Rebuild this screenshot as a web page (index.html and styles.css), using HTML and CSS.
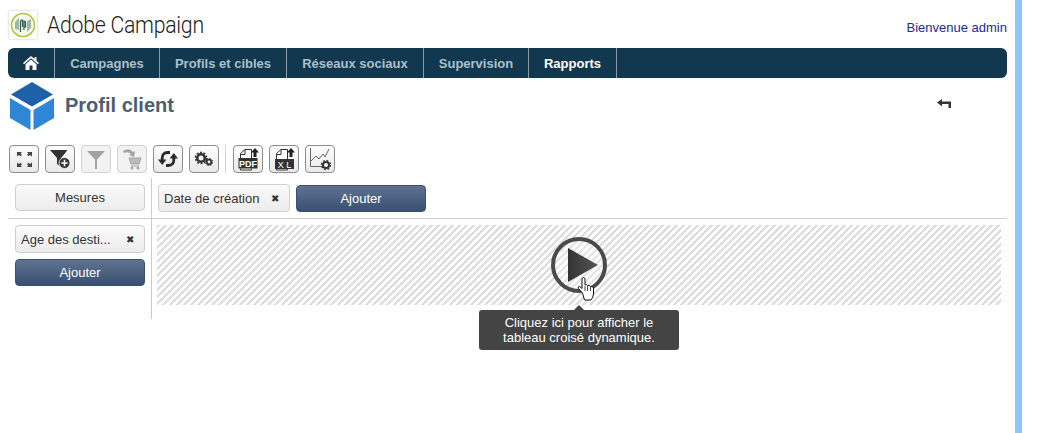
FILE: index.html
```html
<!DOCTYPE html>
<html lang="fr">
<head>
  <meta charset="UTF-8" />
  <title>Adobe Campaign - Profil client</title>
  <link rel="stylesheet" href="styles.css">
</head>
<body>
  <div class="page">
    <div class="main">
      <header class="top">
        <div class="brand">
          <span class="logo">
            <svg width="28" height="28" viewBox="0 0 28 28">
              <circle cx="14" cy="14" r="11.500" fill="#f4f6f1" stroke="#b3c638" stroke-width="1.600"/>
              <path d="M6 18V11l4-4v12zM18 21V10l4-2v9z" fill="#9cb8a6"/>
              <path d="M11.500 21V10.500q0-1.500 1.500-1.500h.5v7M15 19v-9q1.500 0 1.500 1.500V16l-2.500 1.500" fill="none" stroke="#2f5a45" stroke-width="1.200"/>
            </svg>
          </span>
          <span class="brand-name">Adobe Campaign</span>
        </div>
        <a class="welcome">Bienvenue admin</a>
      </header>

      <nav class="nav">
        <a class="nav-home">
          <svg width="16" height="14" viewBox="0 0 16 14">
            <path d="M8 0L0 7l1 1.200L8 2.300l7 5.900L16 7l-2.500-2.200V1h-2v2z" fill="#fff"/>
            <path d="M8 3.500L2.500 8.200V14h4V9.500h3V14h4V8.200z" fill="#fff"/>
          </svg>
        </a>
        <a class="nav-item nav-campagnes">Campagnes</a>
        <a class="nav-item nav-profils">Profils et cibles</a>
        <a class="nav-item nav-reseaux">Réseaux sociaux</a>
        <a class="nav-item nav-supervision">Supervision</a>
        <a class="nav-item nav-rapports active">Rapports</a>
      </nav>

      <div class="title-row">
        <svg class="cube" width="44" height="48" viewBox="0 0 44 48">
          <path d="M22 0L43 12.500 22 24.500 1 12.500z" fill="#1f61a8"/>
          <path d="M0 16L20.500 28V48L0 36z" fill="#2f86d6"/>
          <path d="M44 16L23.500 28V48L44 36z" fill="#2f86d6"/>
        </svg>
        <h1 class="title">Profil client</h1>
        <svg class="back" width="14" height="9" viewBox="0 0 14 9">
          <path d="M0 3.500L5 0v2.500h9V9h-2.500V5H5v2.500z" fill="#333"/>
        </svg>
      </div>

      <div class="toolbar">
        <button class="tool">
          <svg width="18" height="18" viewBox="0 0 18 18" fill="#444">
            <path d="M2 2h5L5.600 3.400 7 4.800 5.500 6.300 4 4.900 2 6.500zM17 2v4.500l-2-1.600-1.500 1.400L12 4.800l1.400-1.400L12 2zM2 17v-4.500l2 1.600 1.500-1.400L7 14.200l-1.400 1.400L7 17zM17 17h-5l1.400-1.400L12 14.200l1.500-1.500 1.500 1.400 2-1.600z"/>
          </svg>
        </button>
        <button class="tool">
          <svg width="24" height="24" viewBox="0 0 24 24">
            <path d="M2 3h18l-7 8v9l-4-3v-6z" fill="#333"/>
            <path d="M21 1l-6 10" stroke="#fff" stroke-width="1"/>
            <circle cx="16.500" cy="16" r="5.500" fill="#333" stroke="#fff" stroke-width=".8"/>
            <path d="M16.500 12.800v6.400M13.300 16h6.400" stroke="#fff" stroke-width="1.600"/>
          </svg>
        </button>
        <button class="tool off">
          <svg width="22" height="22" viewBox="0 0 22 22">
            <path d="M2 3h18l-8 8.500V21h-2v-9.500z" fill="#a3a3a3"/>
          </svg>
        </button>
        <button class="tool off">
          <svg width="22" height="24" viewBox="0 0 22 24">
            <path d="M2 4q6-4 10 1l2-1-1 6-5-2 2-1q-3-3-7-1z" fill="#a3a3a3"/>
            <path d="M8 11h12l-2 6H10zM10 19h8" stroke="#a5a5a5" fill="#bbb" stroke-width="1"/>
            <circle cx="11" cy="21" r="1.500" fill="#a5a5a5"/>
            <circle cx="17" cy="21" r="1.500" fill="#a5a5a5"/>
          </svg>
        </button>
        <button class="tool">
          <svg width="20" height="20" viewBox="0 0 20 20">
            <g class="sync-arrow">
              <path d="M12 3.500H9.500C6 3.500 4.200 6 4.200 9v2" fill="none" stroke="#2b2b2b" stroke-width="2.800"/>
              <path d="M0 10.500h8.400l-4.200 5.500z" fill="#2b2b2b"/>
            </g>
            <g class="sync-arrow" transform="rotate(180 10 10)">
              <path d="M12 3.500H9.500C6 3.500 4.200 6 4.200 9v2" fill="none" stroke="#2b2b2b" stroke-width="2.800"/>
              <path d="M0 10.500h8.400l-4.200 5.500z" fill="#2b2b2b"/>
            </g>
          </svg>
        </button>
        <button class="tool">
          <svg width="20" height="18" viewBox="0 0 20 18">
            <circle cx="7" cy="8" r="3.800" fill="none" stroke="#333" stroke-width="2.600"/>
            <circle cx="7" cy="8" r="5.600" fill="none" stroke="#333" stroke-width="1.400" stroke-dasharray="2 1.520"/>
            <circle cx="15" cy="12" r="2.300" fill="none" stroke="#333" stroke-width="1.800"/>
            <circle cx="15" cy="12" r="3.600" fill="none" stroke="#333" stroke-width="1" stroke-dasharray="1.500 1.330"/>
          </svg>
        </button>
        <span class="tool-sep"></span>
        <button class="tool">
          <svg width="24" height="24" viewBox="0 0 24 24">
            <path d="M4.500 11V6.500L9 2.500h6.500V11M4.500 21.500v1.500h11v-1.500" fill="#fff" stroke="#333"/>
            <path d="M4 7.500h5V3" fill="none" stroke="#333"/>
            <path d="M19 1l4 4.500h-2.500V10h-3V5.500H15z" fill="#222"/>
            <rect x="2.500" y="11" width="19" height="10.500" fill="#333"/>
            <text x="12" y="20" class="file-label" textLength="18" lengthAdjust="spacingAndGlyphs">PDF</text>
          </svg>
        </button>
        <button class="tool">
          <svg width="24" height="24" viewBox="0 0 24 24">
            <path d="M4.500 12V6.500L9 2.500h6.500V12M4.500 22v1h11v-1" fill="#fff" stroke="#333"/>
            <path d="M4 7.500h5V3" fill="none" stroke="#333"/>
            <path d="M19 1l4 4.500h-2.500V10h-3V5.500H15z" fill="#222"/>
            <rect x="3" y="12" width="19" height="10" fill="#333"/>
            <text x="12.500" y="20.500" class="file-label light">X L</text>
          </svg>
        </button>
        <button class="tool">
          <svg width="24" height="24" viewBox="0 0 24 24">
            <path d="M2.500 1v18.500H16" fill="none" stroke="#666"/>
            <path d="M3 14l5-5 3 3 4-5 2 3 4-8" fill="none" stroke="#666"/>
            <circle cx="18" cy="18" r="3" fill="#fff" stroke="#333" stroke-width="2"/>
            <circle cx="18" cy="18" r="4.500" fill="none" stroke="#333" stroke-width="1.400" stroke-dasharray="1.800 1.730"/>
          </svg>
        </button>
      </div>

      <div class="pivot">
        <div class="corner">
          <button class="btn measure">Mesures</button>
        </div>
        <div class="cols">
          <span class="chip chip-date">Date de création <i class="chip-x">✖</i></span>
          <button class="btn primary add-col">Ajouter</button>
        </div>
        <div class="rows">
          <span class="chip chip-age">Age des desti... <i class="chip-x">✖</i></span>
          <button class="btn primary add-row">Ajouter</button>
        </div>
        <div class="data">
          <div class="hatch">
            <svg class="play" width="58" height="58" viewBox="0 0 58 58">
              <defs>
                <linearGradient id="playFill" x1="0" x2="1" y1="0" y2="0">
                  <stop offset="0" stop-color="#333"/>
                  <stop offset="1" stop-color="#555"/>
                </linearGradient>
              </defs>
              <circle cx="29" cy="29" r="26" fill="#fff" fill-opacity=".25" stroke="#4a4a4a" stroke-width="4"/>
              <path d="M18 12L48 29 18 46z" fill="url(#playFill)"/>
            </svg>
            <svg class="hand" width="18" height="25" viewBox="0 0 18 25">
              <path d="M5.500 17L1.500 12.500Q.5 10.500 2.500 10.500L5 12.500V2.500Q6.500.5 8 2.500V9Q9.500 8 10.500 9.500 12.500 8.500 13.500 10.500 15.500 10 16.500 12V18Q16 22 14 24H7.500z" fill="#fff" stroke="#111" stroke-width="1"/>
              <path d="M8 10v5M10.500 10v5M13.500 11v4" stroke="#111" stroke-width=".8" fill="none"/>
            </svg>
          </div>
          <div class="tip">Cliquez ici pour afficher le<br>tableau croisé dynamique.</div>
        </div>
      </div>
    </div>
    <div class="strip"></div>
  </div>
</body>
</html>
```

FILE: styles.css
```css
html, body {
  margin: 0;
  padding: 0;
  background: #fff;
}
body {
  font-family: "Liberation Sans", Arial, sans-serif;
  font-size: 13px;
  color: #333;
  overflow: hidden;
}
.page {
  display: flex;
  height: 433px;
}
.main {
  width: 999px;
  padding: 0 8px;
}
.strip {
  width: 7px;
  background: #90c6f9;
}

/* header */
.top {
  display: flex;
  justify-content: space-between;
  height: 48px;
}
.brand {
  display: flex;
  align-items: center;
  padding: 1px 0 0 1px;
  gap: 10px;
  height: 47px;
}
.logo {
  width: 28px;
  height: 28px;
  box-shadow: 0 0 2px #bbb;
}
.brand-name {
  display: inline-block;
  font-family: Roboto, sans-serif;
  font-weight: 300;
  font-size: 24px;
  letter-spacing: -0.3px;
  color: #222;
  transform: scaleX(.886);
  transform-origin: left center;
}
.welcome {
  padding-top: 20px;
  font-size: 13px;
  color: #1a2c96;
}

/* nav */
.nav {
  display: flex;
  height: 30px;
  background: #12384f;
  border-radius: 6px;
}
.nav a {
  display: flex;
  align-items: center;
  justify-content: center;
  box-sizing: border-box;
  border-right: 1px solid #8a9ba6;
  font-size: 13px;
  font-weight: bold;
  color: #a9c0cc;
}
.nav-home { width: 47px; }
.nav-campagnes { width: 105px; }
.nav-profils { width: 127px; }
.nav-reseaux { width: 137px; }
.nav-supervision { width: 105px; }
.nav-rapports { width: 88px; }
.nav a.active { color: #fff; }

/* title */
.title-row {
  display: flex;
  align-items: center;
  height: 56px;
  position: relative;
}
.cube {
  margin: 0 0 0 2px;
}
.title {
  margin: 0 0 0 11px;
  font-size: 20px;
  font-weight: bold;
  color: #4c5f70;
  flex: 1;
  position: relative;
  top: -1px;
}
.back {
  margin-right: 56px;
  position: relative;
  top: -3px;
}

/* toolbar */
.toolbar {
  display: flex;
  align-items: center;
  gap: 6px;
  height: 30px;
  margin-top: 10px;
  padding-left: 1px;
}
.tool {
  display: flex;
  align-items: center;
  justify-content: center;
  width: 30px;
  height: 28px;
  padding: 0;
  box-sizing: border-box;
  border: 1px solid #8e8e8e;
  border-radius: 4px;
  background: linear-gradient(#fdfdfd, #e9e9e9);
}
.tool.off {
  border-color: #d2d2d2;
  background: #f2f2f2;
}
.tool-sep {
  width: 1px;
  height: 28px;
  background: #d5d5d5;
  margin-right: 1px;
}
.file-label {
  font-family: "Liberation Sans", sans-serif;
  font-size: 9px;
  font-weight: bold;
  fill: #fff;
  text-anchor: middle;
}
.file-label.light {
  font-weight: normal;
}

/* pivot */
.pivot {
  display: grid;
  grid-template-columns: 144px 855px;
  grid-template-rows: 41px 100px;
  margin-top: 4px;
}
.corner, .rows {
  border-right: 1px solid #cccccc;
  padding-left: 7px;
}
.corner, .cols {
  border-bottom: 1px solid #cccccc;
  box-sizing: border-box;
}
.corner {
  padding-top: 6px;
  padding-left: 7px;
}
.cols {
  display: flex;
  padding: 6px 0 0 6px;
  gap: 6px;
  align-items: flex-start;
}
.rows {
  display: flex;
  flex-direction: column;
  gap: 6px;
  padding-top: 6px;
  align-items: flex-start;
}
.btn, .chip {
  box-sizing: border-box;
  width: 130px;
  border-radius: 4px;
  font-family: "Liberation Sans", sans-serif;
  font-size: 13px;
  padding: 0;
}
.btn {
  height: 27px;
  text-align: center;
  cursor: pointer;
}
.measure {
  border: 1px solid #cfcfcf;
  background: linear-gradient(#fafafa, #ececec);
  color: #333;
}
.primary {
  border: 1px solid #3a5070;
  background: linear-gradient(#5f7390, #3a5072);
  color: #fff;
}
.add-col {
  margin-top: 1px;
}
.chip {
  display: flex;
  align-items: center;
  justify-content: space-between;
  height: 28px;
  padding: 0 10px 0 5px;
  border: 1px solid #cfcfcf;
  background: linear-gradient(#fafafa, #ececec);
  color: #333;
}
.chip-date {
  width: 132px;
}
.chip-x {
  font-style: normal;
  font-size: 10px;
  color: #333;
}

/* data area */
.data {
  padding: 6px 0 0 5px;
  position: relative;
}
.hatch {
  position: relative;
  width: 844px;
  height: 80px;
  background: repeating-linear-gradient(135deg, #dcdcdc 0, #dcdcdc 2.475px, #fff 2.475px, #fff 4.95px);
}
.play {
  position: absolute;
  left: 393px;
  top: 11px;
}
.hand {
  position: absolute;
  left: 420px;
  top: 51px;
}
.tip {
  position: absolute;
  left: 327px;
  top: 91px;
  width: 200px;
  height: 40px;
  box-sizing: border-box;
  padding-top: 5px;
  background: #444;
  border-radius: 3px;
  color: #fff;
  font-size: 13px;
  line-height: 15px;
  text-align: center;
}
.tip::before {
  content: "";
  position: absolute;
  left: 94px;
  top: -5px;
  border: 6px solid transparent;
  border-top: 0;
  border-bottom-color: #444;
}
```
